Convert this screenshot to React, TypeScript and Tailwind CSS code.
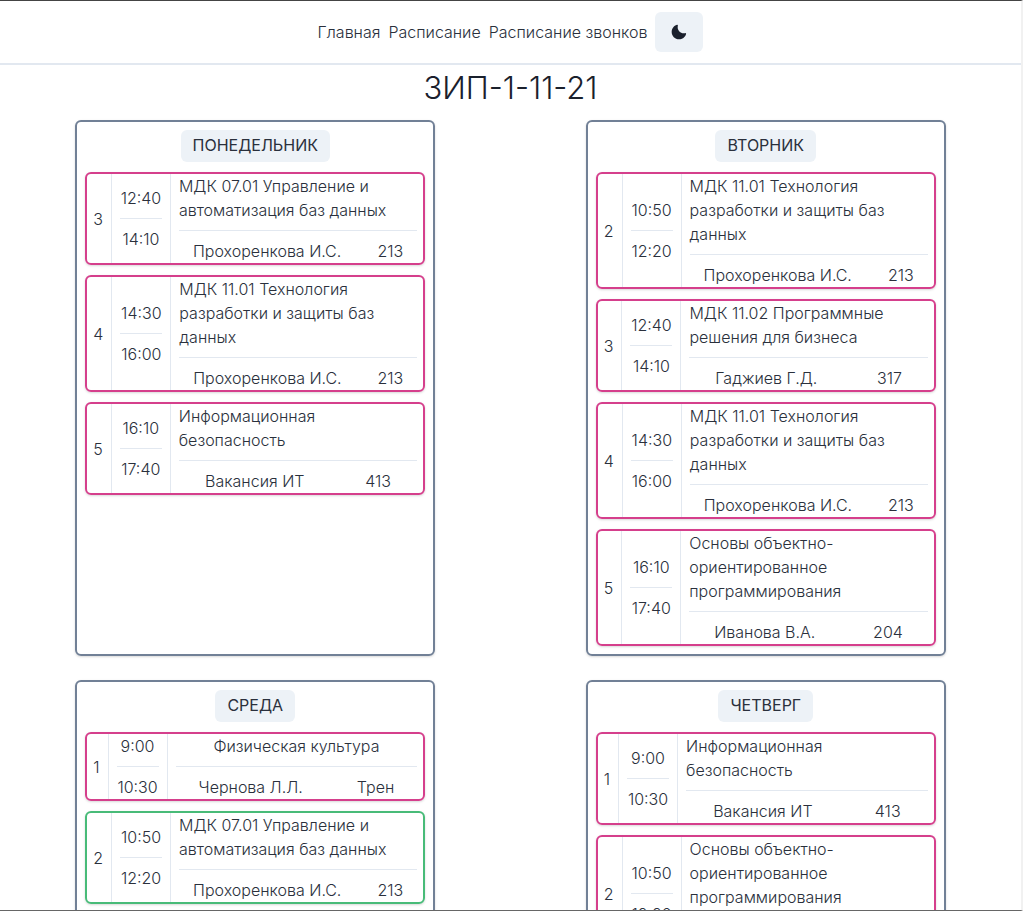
type Lesson = {
  number: number;
  start: string;
  end: string;
  subject: string;
  teacher: string;
  room: string;
  current?: boolean;
};

type Day = { name: string; lessons: Lesson[] };

const days: Day[] = [
  {
    name: "Понедельник",
    lessons: [
      { number: 3, start: "12:40", end: "14:10", subject: "МДК 07.01 Управление и автоматизация баз данных", teacher: "Прохоренкова И.С.", room: "213" },
      { number: 4, start: "14:30", end: "16:00", subject: "МДК 11.01 Технология разработки и защиты баз данных", teacher: "Прохоренкова И.С.", room: "213" },
      { number: 5, start: "16:10", end: "17:40", subject: "Информационная безопасность", teacher: "Вакансия ИТ", room: "413" },
    ],
  },
  {
    name: "Вторник",
    lessons: [
      { number: 2, start: "10:50", end: "12:20", subject: "МДК 11.01 Технология разработки и защиты баз данных", teacher: "Прохоренкова И.С.", room: "213" },
      { number: 3, start: "12:40", end: "14:10", subject: "МДК 11.02 Программные решения для бизнеса", teacher: "Гаджиев Г.Д.", room: "317" },
      { number: 4, start: "14:30", end: "16:00", subject: "МДК 11.01 Технология разработки и защиты баз данных", teacher: "Прохоренкова И.С.", room: "213" },
      { number: 5, start: "16:10", end: "17:40", subject: "Основы объектно-ориентированное программирования", teacher: "Иванова В.А.", room: "204" },
    ],
  },
  {
    name: "Среда",
    lessons: [
      { number: 1, start: "9:00", end: "10:30", subject: "Физическая культура", teacher: "Чернова Л.Л.", room: "Трен" },
      { number: 2, start: "10:50", end: "12:20", subject: "МДК 07.01 Управление и автоматизация баз данных", teacher: "Прохоренкова И.С.", room: "213", current: true },
    ],
  },
  {
    name: "Четверг",
    lessons: [
      { number: 1, start: "9:00", end: "10:30", subject: "Информационная безопасность", teacher: "Вакансия ИТ", room: "413" },
      { number: 2, start: "10:50", end: "12:20", subject: "Основы объектно-ориентированное программирования", teacher: "Иванова В.А.", room: "204" },
    ],
  },
];

const shadow = "shadow-[0_1px_3px_rgba(0,0,0,0.1),0_1px_2px_rgba(0,0,0,0.06)]";

function MoonIcon() {
  return (
    <svg viewBox="0 0 24 24" className="size-4" fill="currentColor" aria-hidden="true">
      <path d="M21.4,13.7C20.6,13.9,19.8,14,19,14c-5,0-9-4-9-9c0-0.8,0.1-1.6,0.3-2.4c0.1-0.3,0-0.7-0.3-1c-0.3-0.3-0.6-0.4-1-0.3C4.3,2.7,1,7.1,1,12c0,6.1,4.9,11,11,11c4.9,0,9.3-3.3,10.6-8.1c0.1-0.3,0-0.7-0.3-1C22.1,13.7,21.7,13.6,21.4,13.7z" />
    </svg>
  );
}

function LessonCard({ lesson }: { lesson: Lesson }) {
  return (
    <li
      className={`flex gap-2 rounded-md border-2 px-1.5 ${shadow} ${
        lesson.current ? "border-[#48bb78]" : "border-[#d53f8c]"
      }`}
    >
      <span className="self-center">{lesson.number}</span>
      <div className="w-px shrink-0 bg-[#e2e8f0]" />
      <div className="flex min-w-[42px] flex-col gap-2 self-center text-center">
        <time>{lesson.start}</time>
        <hr className="border-[#e2e8f0]" />
        <time>{lesson.end}</time>
      </div>
      <div className="w-px shrink-0 bg-[#e2e8f0]" />
      <div className="flex min-w-0 flex-1 flex-col gap-2">
        <h3 className="self-center">{lesson.subject}</h3>
        <hr className="border-[#e2e8f0]" />
        <div className="flex justify-around gap-2">
          <span>{lesson.teacher}</span>
          <span>{lesson.room}</span>
        </div>
      </div>
    </li>
  );
}

function DayCard({ day }: { day: Day }) {
  return (
    <section className={`flex w-full max-w-[360px] flex-col gap-2.5 rounded-md border-2 border-[#718096] p-2 ${shadow}`}>
      <h2 className="self-center rounded-md bg-[#edf2f7] px-3 pt-[3px] pb-[5px] font-normal uppercase">{day.name}</h2>
      <ul className="flex flex-col gap-2.5">
        {day.lessons.map((lesson) => (
          <LessonCard key={lesson.number} lesson={lesson} />
        ))}
      </ul>
    </section>
  );
}

export default function App() {
  return (
    <div className="flex h-screen flex-col border-t border-r-2 border-b border-t-[#444444] border-r-[#f1f1f1] border-b-[#666666] bg-white font-['Inter','Liberation_Sans',sans-serif] text-base font-light text-[#2a303c]">
      <header className="flex shrink-0 items-center justify-center gap-2 border-b-2 border-[#e2e8f0] py-[11px]">
        <nav className="flex gap-2">
          <a href="#home">Главная</a>
          <a href="#schedule">Расписание</a>
          <a href="#bells">Расписание звонков</a>
        </nav>
        <button
          type="button"
          aria-label="Переключить тему"
          className="flex h-10 w-12 items-center justify-center rounded-md bg-[#edf2f7] text-[#1a202c]"
        >
          <MoonIcon />
        </button>
      </header>
      <main className="min-h-0 flex-1 overflow-y-auto [scrollbar-width:none]">
        <h1 className="mb-2.5 text-center text-[31px] leading-[45px] text-[#1a202c]">ЗИП-1-11-21</h1>
        <div className="grid grid-cols-1 justify-items-center gap-y-6 md:grid-cols-2">
          {days.map((day) => (
            <DayCard key={day.name} day={day} />
          ))}
        </div>
      </main>
    </div>
  );
}
